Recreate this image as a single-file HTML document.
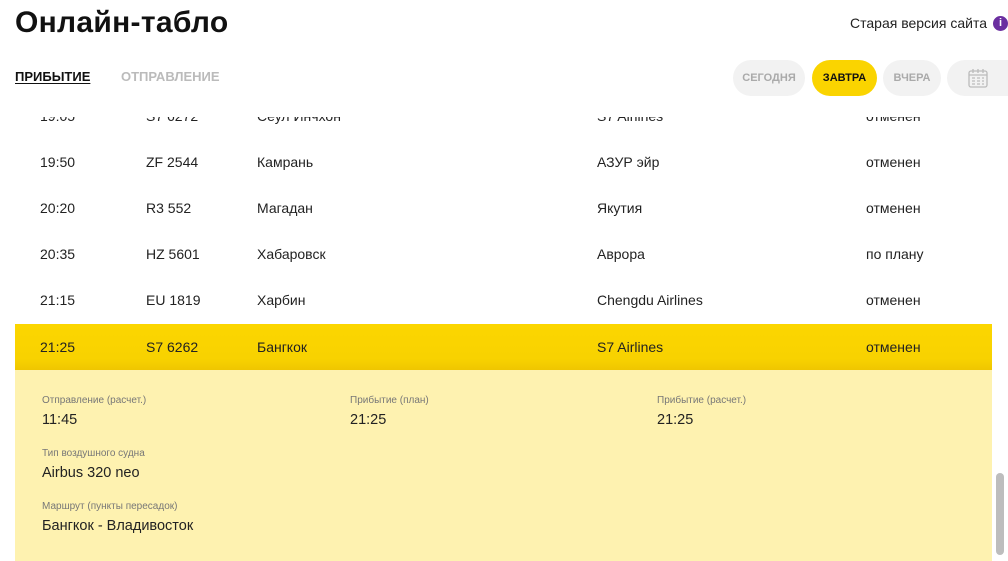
<!DOCTYPE html>
<html><head><meta charset="utf-8"><style>
*{margin:0;padding:0;box-sizing:border-box}
body{width:1008px;height:561px;overflow:hidden;background:#fff;font-family:"Liberation Sans",Arial,sans-serif;color:#222;position:relative}
.a{position:absolute;white-space:nowrap}
.row{position:absolute;left:15px;width:977px;height:46px;font-size:14px}
.row span{position:absolute;top:15px}
.hdr{position:absolute;left:0;top:0;width:1008px;height:117px;background:#fff;z-index:2}
.pill{position:absolute;top:60px;height:36px;border-radius:18px;background:#f2f2f2;color:#aaa;font-size:11px;font-weight:bold;text-align:center;line-height:36px}
.lbl{position:absolute;font-size:10px;color:#777}
.val{position:absolute;font-size:14.5px;color:#222}
</style></head><body>
<div class="hdr">
<div class="a" style="left:15px;top:6px;font-size:30px;font-weight:bold;color:#111;letter-spacing:0.3px">Онлайн-табло</div>
<div class="a" style="left:850px;top:15px;font-size:14px;color:#222">Старая версия сайта</div>
<div class="a" style="left:993px;top:16px;width:15px;height:15px;border-radius:50%;background:#6b2fa0;color:#fff;font-size:11px;font-weight:bold;text-align:center;line-height:15px">i</div>
<div class="a" style="left:15px;top:69px;font-size:13px;font-weight:bold;color:#111;text-decoration:underline;text-underline-offset:2px">ПРИБЫТИЕ</div>
<div class="a" style="left:121px;top:69px;font-size:13px;font-weight:bold;color:#bbb">ОТПРАВЛЕНИЕ</div>
<div class="pill" style="left:733px;width:72px">СЕГОДНЯ</div>
<div class="pill" style="left:812px;width:65px;background:#fad400;color:#111">ЗАВТРА</div>
<div class="pill" style="left:883px;width:58px">ВЧЕРА</div>
<div class="pill" style="left:947px;width:61px;border-radius:18px 0 0 18px">
<svg width="22" height="22" viewBox="0 0 22 22" style="margin-top:7px" fill="none" stroke="#bbb" stroke-width="1.3"><rect x="2" y="4" width="18" height="16" rx="2"/><line x1="6" y1="2" x2="6" y2="6"/><line x1="11" y1="2" x2="11" y2="6"/><line x1="16" y1="2" x2="16" y2="6"/><line x1="2" y1="8" x2="20" y2="8"/><path d="M5 11h3M10 11h3M15 11h2M5 14h3M10 14h3M15 14h2M5 17h3M10 17h3M15 17h2"/></svg></div>
</div>
<div class="row" style="top:93px"><span style="left:25px">19:05</span><span style="left:131px">S7 6272</span><span style="left:242px">Сеул Инчхон</span><span style="left:582px">S7 Airlines</span><span style="left:851px">отменен</span></div>
<div class="row" style="top:139px"><span style="left:25px">19:50</span><span style="left:131px">ZF 2544</span><span style="left:242px">Камрань</span><span style="left:582px">АЗУР эйр</span><span style="left:851px">отменен</span></div>
<div class="row" style="top:185px"><span style="left:25px">20:20</span><span style="left:131px">R3 552</span><span style="left:242px">Магадан</span><span style="left:582px">Якутия</span><span style="left:851px">отменен</span></div>
<div class="row" style="top:231px"><span style="left:25px">20:35</span><span style="left:131px">HZ 5601</span><span style="left:242px">Хабаровск</span><span style="left:582px">Аврора</span><span style="left:851px">по плану</span></div>
<div class="row" style="top:277px"><span style="left:25px">21:15</span><span style="left:131px">EU 1819</span><span style="left:242px">Харбин</span><span style="left:582px">Chengdu Airlines</span><span style="left:851px">отменен</span></div>
<div class="row" style="top:324px;background:linear-gradient(#fcd600,#f8d200 75%,#efc600)"><span style="left:25px">21:25</span><span style="left:131px">S7 6262</span><span style="left:242px">Бангкок</span><span style="left:582px">S7 Airlines</span><span style="left:851px">отменен</span></div>
<div class="a" style="left:15px;top:370px;width:977px;height:191px;background:#fef2b0"></div>
<div class="lbl" style="left:42px;top:395px">Отправление (расчет.)</div>
<div class="val" style="left:42px;top:412px">11:45</div>
<div class="lbl" style="left:350px;top:395px">Прибытие (план)</div>
<div class="val" style="left:350px;top:412px">21:25</div>
<div class="lbl" style="left:657px;top:395px">Прибытие (расчет.)</div>
<div class="val" style="left:657px;top:412px">21:25</div>
<div class="lbl" style="left:42px;top:448px">Тип воздушного судна</div>
<div class="val" style="left:42px;top:465px">Airbus 320 neo</div>
<div class="lbl" style="left:42px;top:501px">Маршрут (пункты пересадок)</div>
<div class="val" style="left:42px;top:518px">Бангкок - Владивосток</div>
<div class="a" style="left:996px;top:473px;width:8px;height:82px;border-radius:4px;background:#bdbdbd"></div>
</body></html>
